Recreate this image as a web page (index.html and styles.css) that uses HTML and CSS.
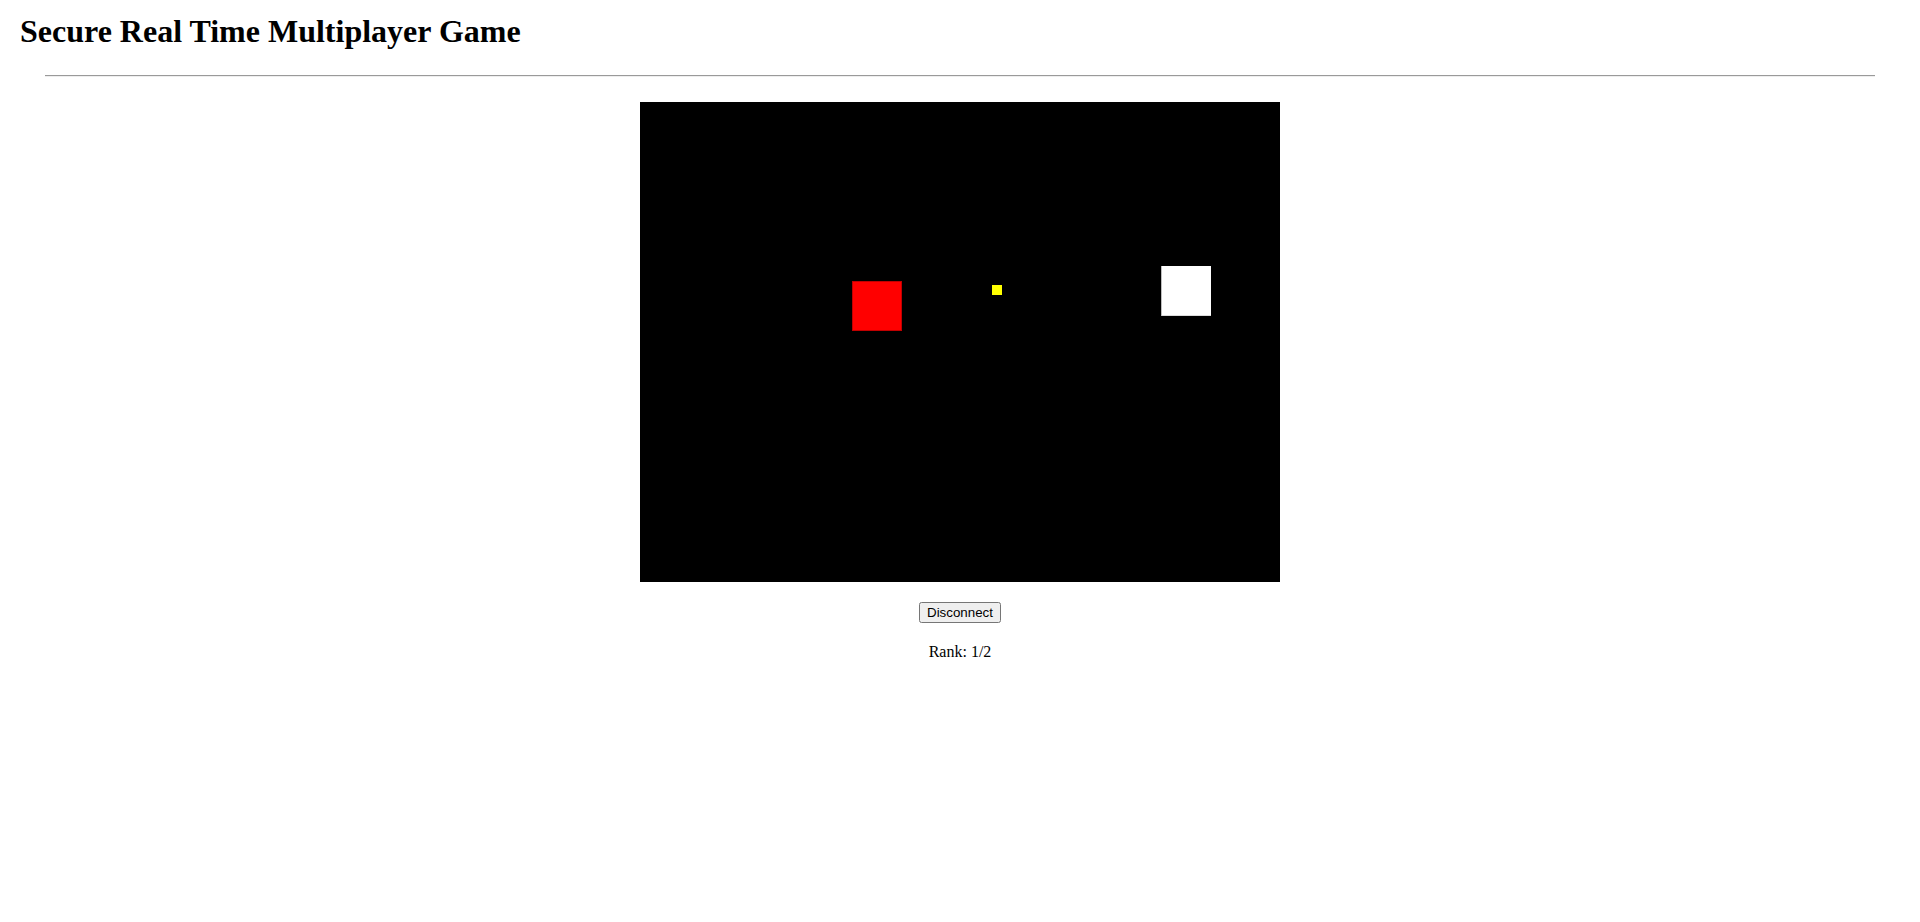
FILE: index.html
```html
<!DOCTYPE html>
<html lang="en">
<head>
<meta charset="utf-8">
<title>Secure Real Time Multiplayer Game</title>
<link rel="stylesheet" href="styles.css">
</head>
<body>
<div class="container">
  <h1 class="title">Secure Real Time Multiplayer Game</h1>
  <hr class="divider">
  <div class="board">
    <div class="piece player-red"></div>
    <div class="piece collectible"></div>
    <div class="piece player-white"></div>
  </div>
  <div class="controls">
    <button class="btn" type="button">Disconnect</button>
  </div>
  <p class="rank">Rank: 1/2</p>
</div>
</body>
</html>
```
FILE: styles.css
```css
html, body {
  margin: 0;
  padding: 0;
  background: #fff;
}
body {
  font-family: "Liberation Serif", "Times New Roman", serif;
  color: #000;
}
.container {
  padding: 0 20px;
}
.title {
  font-size: 32px;
  font-weight: bold;
  margin: 0;
  padding-top: 13px;
}
.divider {
  margin: 25px;
  border: 0;
  border-top: 1px solid #9a9a9a;
  border-bottom: 1px solid #eeeeee;
  height: 0;
}
.board {
  position: relative;
  width: 640px;
  height: 480px;
  margin: 0 auto;
  background: #000;
}
.piece {
  position: absolute;
}
.player-red {
  left: 212px;
  top: 179px;
  width: 50px;
  height: 50px;
  background: #ff0000;
  box-shadow: inset 0 0 0 1px #c00000;
}
.player-white {
  left: 521px;
  top: 164px;
  width: 50px;
  height: 50px;
  background: #fff;
  box-shadow: inset 1px 0 0 #bdbdbd, inset 0 -1px 0 #dcdcdc;
}
.collectible {
  left: 352px;
  top: 183px;
  width: 10px;
  height: 10px;
  background: #ffff00;
}
.controls {
  margin-top: 20px;
  text-align: center;
}
.btn {
  font-family: "Liberation Sans", Arial, sans-serif;
  font-size: 13.333px;
}
.rank {
  text-align: center;
  font-size: 16px;
  margin: 20px 0 0;
}
```
